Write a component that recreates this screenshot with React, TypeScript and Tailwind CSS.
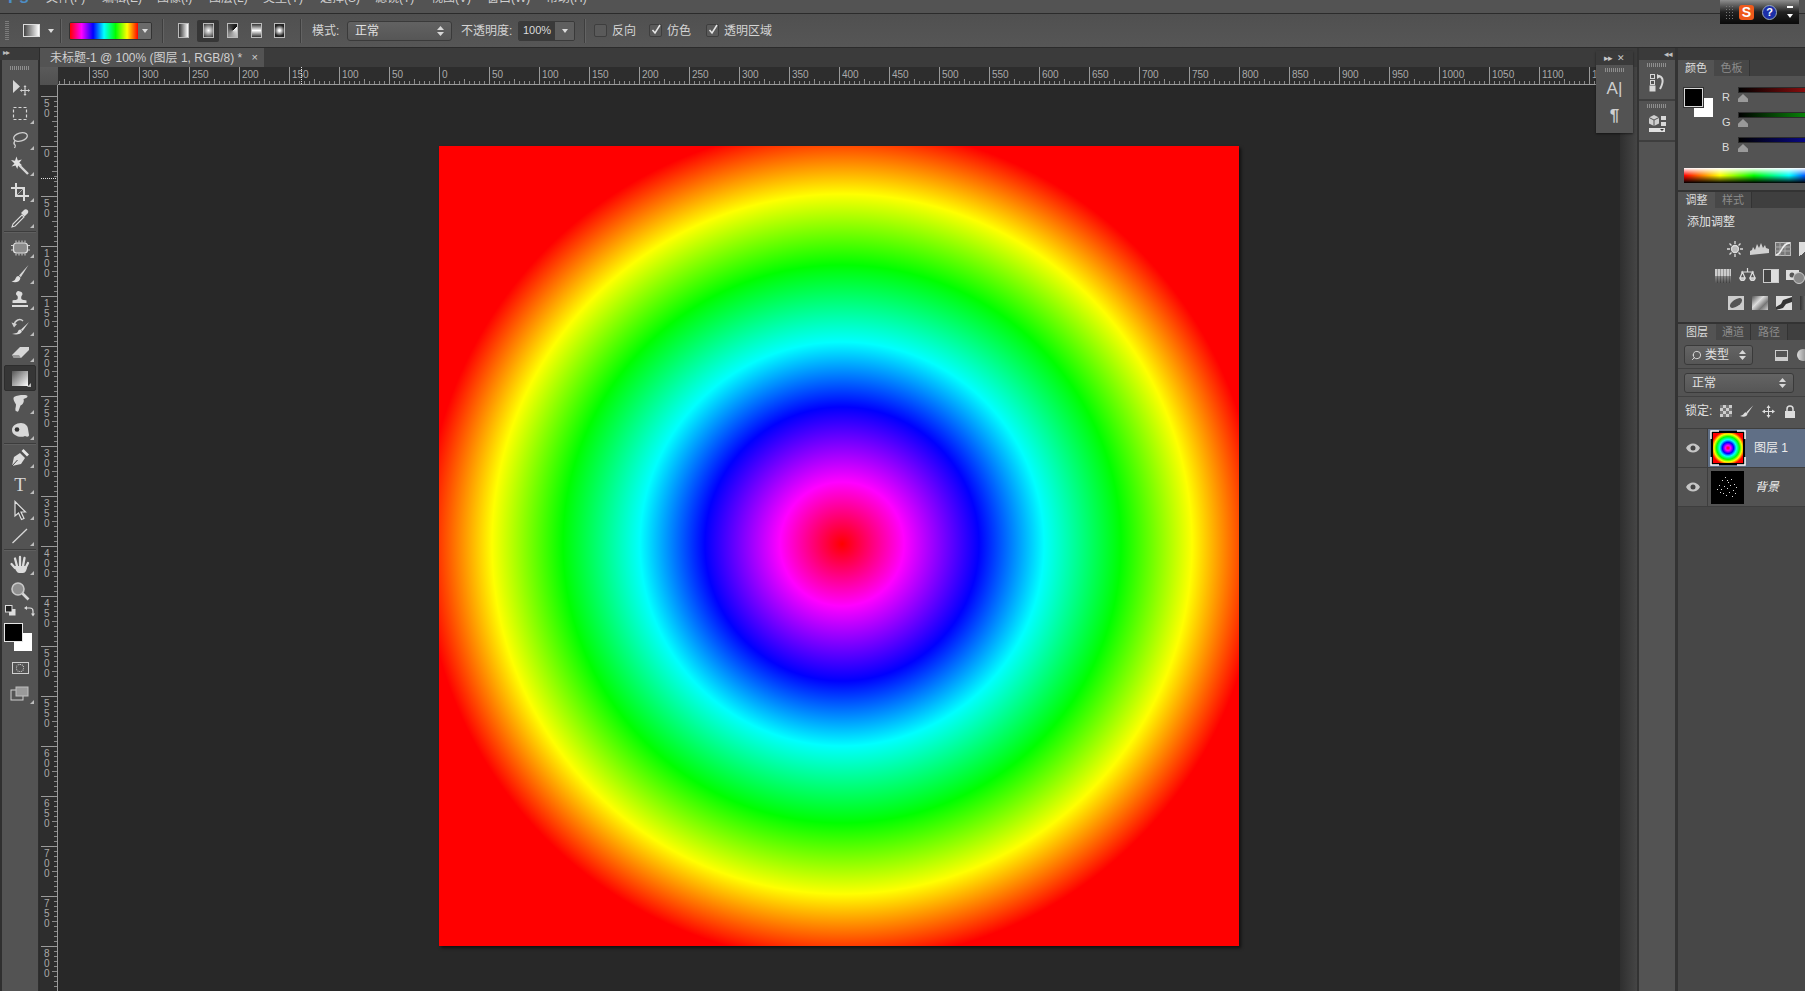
import type { ReactNode } from "react"
import { Search } from "lucide-react"

const menus = [
  { label: "文件(F)", w: "w-[56px]" },
  { label: "编辑(E)", w: "w-[55px]" },
  { label: "图像(I)", w: "w-[52px]" },
  { label: "图层(L)", w: "w-[54px]" },
  { label: "类型(Y)", w: "w-[57px]" },
  { label: "选择(S)", w: "w-[55px]" },
  { label: "滤镜(T)", w: "w-[56px]" },
  { label: "视图(V)", w: "w-[56px]" },
  { label: "窗口(W)", w: "w-[59px]" },
  { label: "帮助(H)", w: "w-[56px]" },
]

// Small svg helper, all tool icons share a 22 box
function Ico({ children, size = 22 }: { children: ReactNode; size?: number }) {
  return (
    <svg width={size} height={size} viewBox="0 0 22 22" fill="none" stroke="none">
      {children}
    </svg>
  )
}

const toolIcons: Record<string, ReactNode> = {
  move: (
    <>
      <path d="M4 3v13l7-6.500z" fill="#d6d6d6" />
      <path d="M16 9v9M11.500 13.500h9" stroke="#d0d0d0" strokeWidth="1.200" />
      <path d="M16 8l-1.500 2h3zM16 19l-1.500-2h3zM11 13.500l2-1.500v3zM21 13.500l-2-1.500v3z" fill="#d0d0d0" />
    </>
  ),
  marquee: <rect x="4.500" y="4.500" width="13" height="12" stroke="#d8d8d8" strokeWidth="1.200" strokeDasharray="3 2" />,
  lasso: (
    <>
      <ellipse cx="11.500" cy="8" rx="7" ry="4" transform="rotate(-15 11.500 8)" stroke="#cfcfcf" strokeWidth="1.300" />
      <path d="M6 12c-2 2-1 3 0 4s0 2-.5 3" stroke="#cfcfcf" strokeWidth="1.200" />
    </>
  ),
  wand: (
    <>
      <path d="M9 9l10 10" stroke="#d6d6d6" strokeWidth="2.400" />
      <path d="M7.500 1.500l1.300 4 4-1-2.500 3.300 3 2.700-4-.4-1 4-1.800-3.700-4 1 3-3L2 5l4 .8z" fill="#e2e2e2" />
    </>
  ),
  crop: (
    <>
      <path d="M7 2v13h13M2 7h13v13" stroke="#dcdcdc" strokeWidth="2" />
      <path d="M8 14l6-6" stroke="#aaa" strokeWidth="1" />
    </>
  ),
  dropper: (
    <>
      <path d="M4 17L13 8l2 2-9 9-3 1z" fill="#4a4a4a" stroke="#dcdcdc" strokeWidth="1.100" />
      <path d="M12 6l3-3c1-1 2.500-1 3.500 0s1 2.500 0 3.500l-3 3z" fill="#dcdcdc" />
    </>
  ),
  heal: (
    <>
      <rect x="4.500" y="6" width="14" height="10" rx="3" fill="#8c8c8c" stroke="#e0e0e0" strokeWidth="1.200" />
      <path d="M7 3.500v2M10 3.500v2M13 3.500v2M16 3.500v2M7 16.500v2M10 16.500v2M13 16.500v2M16 16.500v2M2 8.500h2M2 13h2M19 8.500h2M19 13h2" stroke="#d0d0d0" strokeWidth="1" />
    </>
  ),
  brush: (
    <>
      <path d="M19.500 2L10 12.500l1.800 1.700z" fill="#d6d6d6" />
      <path d="M9.500 13c-3 .3-2.500 3-4 4.300-.8.700-2 1-3 1.200 4 1.500 8.500.5 9-3.800z" fill="#e0e0e0" />
    </>
  ),
  stamp: (
    <>
      <path d="M11 2.500a2.500 2.500 0 0 1 1.700 4.300c-.7.700-.5 2-.3 3.200.2 1 3.600 1 5.100 1.500v2.500H3.500V11.500c1.500-.5 4.900-.5 5.100-1.500.2-1.200.4-2.500-.3-3.200A2.500 2.500 0 0 1 11 2.500z" fill="#dcdcdc" />
      <rect x="3" y="16" width="16" height="2" fill="#dcdcdc" />
    </>
  ),
  history: (
    <>
      <path d="M20 7l-8 7.500 1.500 1.500z" fill="#e0e0e0" />
      <path d="M11.500 14.500c-3 .3-2 3-4 3.500l-4.500 1c4 1 9 .8 10-3z" fill="#dcdcdc" />
      <path d="M5 10c1-5 6-7 9-4" stroke="#d0d0d0" strokeWidth="1.400" />
      <path d="M2.500 7.500l2.500 5 3-3.500z" fill="#d0d0d0" />
    </>
  ),
  eraser: (
    <>
      <path d="M3 14l8-8h9v3l-8 8H5z" fill="#d6d6d6" />
      <path d="M3 14l2 3h7l-2-3z" fill="#9a9a9a" />
    </>
  ),
  smudge: <path d="M5 4c4-2 10-2.500 13-1.500 1 .5.500 2-1 2.500l-2.500 1c1 2.500-.5 5.500-3 6.500l-2 5.500c-.5 1-2.500 1-3-.5-.5-2 .5-3.500.5-6C5.500 9 3.500 6 5 4z" fill="#d8d8d8" />,
  sponge: (
    <>
      <path d="M3 11c0-4 4-7 9-7 4 0 7 3 7 6l1 6c0 2-2 2-4 1-3 1.500-7 1-10-1-2-1-3-3-3-5z" fill="#d8d8d8" />
      <circle cx="8" cy="10.500" r="2.300" fill="#333" />
    </>
  ),
  pen: (
    <>
      <path d="M3 19l2-9 6-4 5 5-4 6z" fill="#dcdcdc" />
      <path d="M3 19l5.500-6" stroke="#444" strokeWidth="1" />
      <path d="M12.500 4l2-2 5.500 5.500-2 2z" fill="#e6e6e6" />
    </>
  ),
  path: <path d="M6 2.500V17l3.500-3 3 6.500 2.500-1-3-6.500h4.500z" fill="#444" stroke="#dedede" strokeWidth="1.200" />,
  line: <path d="M3.500 18L18 4" stroke="#d8d8d8" strokeWidth="1.300" />,
  hand: (
    <>
      <path d="M6 14L2.500 10M8 12L6 4.500M11 11.500V3M14 12l1.500-8M16.500 14l2.500-5" stroke="#dcdcdc" strokeWidth="2.300" strokeLinecap="round" />
      <path d="M5 12h13c0 4-1.500 7-4 7H10c-2 0-3.500-3-5-7z" fill="#dcdcdc" />
    </>
  ),
  zoom: (
    <>
      <circle cx="9" cy="9" r="6" fill="#8f8f8f" stroke="#c8c8c8" strokeWidth="1.600" />
      <path d="M13.500 13.500l6 6" stroke="#d8d8d8" strokeWidth="2.600" />
    </>
  ),
}

function Corner() {
  return <span className="absolute right-[4px] bottom-[3px] w-0 h-0 border-l-[4px] border-l-transparent border-b-[4px] border-b-[#bdbdbd]" />
}

function Tool({ name, corner = true }: { name: string; corner?: boolean }) {
  return (
    <div className="relative h-[26px] flex items-center justify-center">
      <Ico>{toolIcons[name]}</Ico>
      {corner && <Corner />}
    </div>
  )
}

function Grip({ className = "" }: { className?: string }) {
  return <div className={`h-[4px] bg-[repeating-linear-gradient(to_right,#8e8e8e_0,#8e8e8e_1px,transparent_1px,transparent_2px)] ${className}`} />
}

function Sep({ className = "" }: { className?: string }) {
  return <div className={`h-[2px] mx-[2px] border-t border-t-[#3c3c3c] border-b border-b-[#5f5f5f] ${className}`} />
}

function Toolbar() {
  return (
    <div className="w-[40px] shrink-0 flex flex-col bg-[#2f2f2f] border-r border-r-[#2b2b2b]">
      <div className="h-[12px] bg-[#3a3a3a] text-[#bcbcbc] text-[8px] leading-[10px] pl-[3px] tracking-[-1px]">▸▸</div>
      <div className="flex-1 ml-[2px] w-[36px] bg-[#535353] flex flex-col">
        <div className="h-[15px] flex items-center justify-center">
          <Grip className="w-[20px]" />
        </div>
        <Tool name="move" corner={false} />
        <Tool name="marquee" />
        <Tool name="lasso" />
        <Tool name="wand" />
        <Tool name="crop" />
        <Tool name="dropper" />
        <Sep className="mb-[2px]" />
        <Tool name="heal" />
        <Tool name="brush" />
        <Tool name="stamp" />
        <Tool name="history" />
        <Tool name="eraser" />
        <div className="relative h-[26px] flex items-center justify-center mx-[2px] bg-[#363636] rounded-[2px] border border-[#2d2d2d]">
          <div className="w-[16px] h-[15px] bg-[linear-gradient(135deg,#555,#fff)]" />
          <Corner />
        </div>
        <Tool name="smudge" />
        <Tool name="sponge" />
        <Sep />
        <Tool name="pen" />
        <div className="relative h-[26px] flex items-center justify-center">
          <span className="font-['Liberation_Serif',serif] text-[19px] text-[#d8d8d8] leading-none">T</span>
          <Corner />
        </div>
        <Tool name="path" />
        <Tool name="line" />
        <Sep className="mb-[1px]" />
        <Tool name="hand" />
        <Tool name="zoom" corner={false} />
        {/* fg/bg swatches */}
        <div className="h-[13px] flex items-center justify-between px-[3px]">
          <svg width="11" height="11" viewBox="0 0 11 11">
            <rect x="4" y="4" width="6.500" height="6.500" fill="#ddd" />
            <rect x="0.500" y="0.500" width="6.500" height="6.500" fill="#222" stroke="#ddd" />
          </svg>
          <svg width="12" height="12" viewBox="0 0 12 12" fill="none" stroke="#ddd" strokeWidth="1.200">
            <path d="M3 3h4a3 3 0 0 1 3 3v3" />
            <path d="M1 3l3-2v4zM10 11.500L8 8.500h4z" fill="#ddd" stroke="none" />
          </svg>
        </div>
        <div className="h-[28px] mt-[6px] ml-[2px] relative">
          <div className="absolute left-[10px] top-[10px] w-[18px] h-[18px] bg-white" />
          <div className="absolute left-0 top-0 w-[19px] h-[19px] bg-black border border-[#e6e6e6]" />
        </div>
        <div className="h-[26px] mt-[4px] flex items-center justify-center">
          <div className="w-[17px] h-[12px] border border-[#d0d0d0] flex items-center justify-center">
            <div className="w-[8px] h-[8px] rounded-full border border-dotted border-[#e0e0e0]" />
          </div>
        </div>
        <div className="relative h-[26px] flex items-center justify-center">
          <svg width="20" height="16" viewBox="0 0 20 16">
            <rect x="1" y="4" width="12" height="10" fill="#555" stroke="#d0d0d0" />
            <rect x="6" y="1" width="12" height="9" fill="#9a9a9a" stroke="#c0c0c0" />
          </svg>
          <Corner />
        </div>
      </div>
    </div>
  )
}

function Divider() {
  return <div className="w-[2px] h-[24px] border-l border-l-[#3e3e3e] border-r border-r-[#636363] shrink-0" />
}

function UpDown() {
  return (
    <svg width="7" height="10" viewBox="0 0 7 10" fill="#d8d8d8">
      <path d="M3.500 0L7 4H0zM3.500 10L0 6h7z" />
    </svg>
  )
}

function Check({ on }: { on: boolean }) {
  return (
    <div className="relative w-[13px] h-[13px] rounded-[2px] bg-[#5a5a5a] border border-[#3e3e3e] shrink-0">
      {on && (
        <svg className="absolute left-0 -top-[2px]" width="13" height="13" viewBox="0 0 13 13" fill="none" stroke="#e6e6e6" strokeWidth="1.500">
          <path d="M2.500 7l2.500 3 5-8" />
        </svg>
      )}
    </div>
  )
}

function OptionsBar() {
  return (
    <div className="h-[34px] flex items-center bg-[linear-gradient(to_bottom,#505050,#565656)] border-b border-b-[#2b2b2b] text-[12px] text-[#d4d4d4] overflow-hidden shrink-0">
      <div className="ml-[5px] w-[4px] h-[20px] bg-[repeating-linear-gradient(to_bottom,#7c7c7c_0,#7c7c7c_1px,transparent_1px,transparent_2px)]" />
      <div className="ml-[14px] w-[17px] h-[13px] bg-[linear-gradient(to_right,#444,#fff)] border border-[#ddd]" />
      <span className="ml-[8px] w-0 h-0 border-x-[3px] border-x-transparent border-t-[4px] border-t-[#ddd]" />
      <div className="ml-[6px]"><Divider /></div>
      <div className="ml-[7px] flex h-[18px] rounded-[2px] overflow-hidden border border-[#333]">
        <div className="w-[68px] bg-[linear-gradient(to_right,#f00,#f0f_17%,#00f_34%,#0ff_50%,#0f0_67%,#ff0_84%,#f00)]" />
        <div className="w-[13px] bg-[#6a6a6a] flex items-center justify-center">
          <span className="w-0 h-0 border-x-[3px] border-x-transparent border-t-[4px] border-t-[#ddd]" />
        </div>
      </div>
      <div className="ml-[10px]"><Divider /></div>
      <div className="ml-[14px] w-[11px] h-[15px] border border-[#bbb] bg-[linear-gradient(to_right,#333,#fff)]" />
      <div className="ml-[8px] w-[22px] h-[22px] bg-[#363636] rounded-[2px] flex items-center justify-center">
        <div className="w-[11px] h-[15px] border border-[#bbb] bg-[radial-gradient(circle,#fff,#333)]" />
      </div>
      <div className="ml-[8px] w-[11px] h-[15px] border border-[#bbb] bg-[conic-gradient(from_45deg,#fff,#111)]" />
      <div className="ml-[13px] w-[11px] h-[15px] border border-[#bbb] bg-[linear-gradient(to_bottom,#333,#fff,#333)]" />
      <div className="ml-[12px] w-[11px] h-[15px] border border-[#bbb] bg-[radial-gradient(circle,#fff_10%,#222_70%)]" />
      <div className="ml-[15px]"><Divider /></div>
      <span className="ml-[10px] w-[35px]">模式:</span>
      <div className="w-[105px] h-[20px] flex items-center justify-between px-[7px] bg-[linear-gradient(to_bottom,#626262,#565656)] border border-[#3a3a3a] rounded-[3px]">
        <span className="text-[#e0e0e0]">正常</span>
        <UpDown />
      </div>
      <span className="ml-[9px] w-[57px] whitespace-nowrap">不透明度:</span>
      <div className="flex h-[20px] rounded-[2px] overflow-hidden border border-[#3a3a3a]">
        <div className="w-[36px] bg-[#3a3a3a] flex items-center justify-center text-[11px] text-[#dadada]">100%</div>
        <div className="w-[19px] bg-[#5f5f5f] flex items-center justify-center">
          <span className="w-0 h-0 border-x-[3px] border-x-transparent border-t-[4px] border-t-[#ddd]" />
        </div>
      </div>
      <div className="ml-[9px]"><Divider /></div>
      <div className="ml-[8px]"><Check on={false} /></div>
      <span className="ml-[5px]">反向</span>
      <div className="ml-[13px]"><Check on /></div>
      <span className="ml-[5px]">仿色</span>
      <div className="ml-[15px]"><Check on /></div>
      <span className="ml-[5px]">透明区域</span>
    </div>
  )
}

const ZERO_X = 381
const ZERO_Y = 61

function HRuler() {
  const ticks = []
  for (let v = -400; v <= 1200; v += 5) {
    const x = ZERO_X + v + 0.5
    const major = v % 50 === 0
    const mid = v % 25 === 0
    ticks.push(<line key={v} x1={x} x2={x} y1={major ? 0 : mid ? 12 : 14} y2={17} stroke={major ? "#9a9a9a" : "#8a8a8a"} />)
  }
  const labels = []
  for (let v = -350; v <= 1150; v += 50) {
    labels.push(
      <text key={v} x={ZERO_X + v + 3} y={11} fontSize="10" fill="#a9a9a9" fontFamily="Liberation Sans, sans-serif">
        {Math.abs(v)}
      </text>,
    )
  }
  return (
    <svg width="1562" height="18" className="block shrink-0">
      <rect width="1562" height="18" fill="#2d2d2d" />
      {ticks}
      {labels}
      <line x1="0" x2="1562" y1="17.500" y2="17.500" stroke="#9a9a9a" />
      <line x1="243.500" x2="243.500" y1="0" y2="17" stroke="#e0e0e0" strokeDasharray="1 1" />
    </svg>
  )
}

function VRuler() {
  const ticks = []
  for (let v = -50; v <= 900; v += 5) {
    const y = ZERO_Y + v + 0.5
    const major = v % 50 === 0
    const mid = v % 25 === 0
    ticks.push(<line key={v} y1={y} y2={y} x1={major ? 1 : mid ? 12 : 14} x2={17} stroke={major ? "#9a9a9a" : "#8a8a8a"} />)
  }
  const labels = []
  for (let v = -50; v <= 850; v += 50) {
    const digits = String(Math.abs(v)).split("")
    digits.forEach((d, i) => {
      labels.push(
        <text key={`${v}-${i}`} x={4} y={ZERO_Y + v + 11 + i * 10} fontSize="10" fill="#a9a9a9" fontFamily="Liberation Sans, sans-serif">
          {d}
        </text>,
      )
    })
  }
  return (
    <svg width="18" height="906" className="block shrink-0">
      <rect width="18" height="906" fill="#2d2d2d" />
      {ticks}
      {labels}
      <line x1="17.500" x2="17.500" y1="0" y2="906" stroke="#9a9a9a" />
      <line y1="93.500" y2="93.500" x1="1" x2="17" stroke="#e0e0e0" strokeDasharray="1 1" />
    </svg>
  )
}

function Document() {
  return (
    <div className="w-[1580px] shrink-0 flex flex-col min-h-0">
      <div className="h-[19px] shrink-0 bg-[#3b3b3b] flex">
        <div className="w-[224px] bg-[#535353] flex items-center pl-[10px] pr-[6px] justify-between text-[12px] text-[#d0d0d0] whitespace-nowrap">
          <span>未标题-1 @ 100% (图层 1, RGB/8) *</span>
          <span className="text-[11px] leading-none">×</span>
        </div>
      </div>
      <div className="flex shrink-0">
        <div className="w-[18px] h-[18px] bg-[linear-gradient(to_bottom,#5a5a5a,#505050)]" />
        <HRuler />
      </div>
      <div className="flex-1 flex min-h-0 overflow-hidden">
        <VRuler />
        <div className="flex-1 bg-[#282828] pl-[381px] pt-[61px]">
          <div className="w-[800px] h-[800px] shadow-[2px_2px_3px_rgba(0,0,0,0.6)] bg-[radial-gradient(circle_418px_at_403px_398px,#f00_0,#f0f_62px,#00f_137px,#0ff_202px,#0f0_279px,#ff0_350px,#f00_418px)]" />
        </div>
      </div>
    </div>
  )
}

function Dock() {
  return (
    <div className="w-[40px] shrink-0 flex flex-col bg-[#535353] border-x-2 border-x-[#333]">
      <div className="h-[12px] bg-[#3a3a3a] shrink-0" />
      <div className="h-[41px] shrink-0 border-b-2 border-b-[#3e3e3e] flex flex-col items-center pt-[3px]">
        <Grip className="w-[20px]" />
        <svg className="mt-[5px] ml-[2px]" width="20" height="20" viewBox="0 0 20 20" fill="none" stroke="#d8d8d8">
          <rect x="2.500" y="2.500" width="4" height="4" />
          <rect x="2.500" y="8.500" width="4" height="4" />
          <rect x="2" y="14" width="5" height="5" fill="#d8d8d8" />
          <path d="M10 4c4 0 7 4 2 13" strokeWidth="2" />
          <path d="M9 2v5l4-2.500z" fill="#d8d8d8" stroke="none" />
        </svg>
      </div>
      <div className="h-[41px] shrink-0 border-b-2 border-b-[#3e3e3e] flex flex-col items-center pt-[3px]">
        <Grip className="w-[20px]" />
        <svg className="mt-[5px] ml-[2px]" width="20" height="20" viewBox="0 0 20 20">
          <path d="M6 2l5 2.500v6L6 13l-5-2.500v-6z" fill="#cfcfcf" />
          <path d="M1 4.500l5 2.500 5-2.500M6 7v6" stroke="#555" fill="none" />
          <rect x="13" y="3" width="5" height="4" fill="#d8d8d8" />
          <rect x="13" y="9" width="5" height="4" fill="#d8d8d8" />
          <rect x="1" y="15" width="16" height="4" fill="#e0e0e0" />
          <path d="M12 16h4l-2 2z" fill="#333" />
        </svg>
      </div>
    </div>
  )
}

function Tabs({ items, widths }: { items: string[]; widths: string[] }) {
  return (
    <div className="h-[16px] shrink-0 flex bg-[#3f3f3f] text-[11px] leading-[17px] whitespace-nowrap">
      {items.map((t, i) => (
        <div key={t} className={`${widths[i]} text-center ${i === 0 ? "bg-[#535353] text-[#dcdcdc]" : "bg-[#474747] text-[#8c8c8c] border-r border-r-[#333]"}`}>
          {t}
        </div>
      ))}
    </div>
  )
}

function Slider({ label, track }: { label: string; track: string }) {
  return (
    <div className="h-[25px] flex">
      <span className="w-[16px] shrink-0 pt-[5px] text-[11px] text-[#dcdcdc] leading-[14px]">{label}</span>
      <div className="relative w-[80px] shrink-0">
        <div className={`h-[6px] mt-[2px] border border-[#2b2b2b] ${track}`} />
        <div className="absolute left-[0px] top-[9px] w-[10px] h-[8px] bg-[#9a9a9a] [clip-path:polygon(50%_0,100%_60%,100%_100%,0_100%,0_60%)]" />
      </div>
    </div>
  )
}

function ColorPanel() {
  return (
    <div className="h-[132px] shrink-0 bg-[#535353] border-b-2 border-b-[#333] flex flex-col">
      <Tabs items={["颜色", "色板"]} widths={["w-[36px]", "w-[36px]"]} />
      <div className="flex pt-[12px] pl-[6px] h-[92px] overflow-hidden">
        <div className="relative w-[38px] h-[40px] shrink-0">
          <div className="absolute left-[10px] top-[10px] w-[19px] h-[19px] bg-white" />
          <div className="absolute left-0 top-0 w-[19px] h-[19px] bg-black border border-[#d8d8d8] outline outline-[#333]" />
        </div>
        <div className="w-[96px] shrink-0 -mt-[3px]">
          <Slider label="R" track="bg-[linear-gradient(to_right,#000,#a01010)]" />
          <Slider label="G" track="bg-[linear-gradient(to_right,#000,#0a9a0a)]" />
          <Slider label="B" track="bg-[linear-gradient(to_right,#000,#0a0a9a)]" />
        </div>
      </div>
      <div className="ml-[6px] h-[15px] bg-[linear-gradient(to_bottom,#fff_0%,transparent_50%,#000_100%),linear-gradient(to_right,#f00_0,#ff0_36px,#0f0_70px,#0ff_105px,#00f_130px)]" />
    </div>
  )
}

function AdjIcon({ children, w = "w-[20px]" }: { children: ReactNode; w?: string }) {
  return <div className={`${w} h-[18px] flex items-center justify-center shrink-0`}>{children}</div>
}

function AdjustPanel() {
  return (
    <div className="h-[132px] shrink-0 bg-[#535353] border-b-2 border-b-[#333] flex flex-col overflow-hidden">
      <Tabs items={["调整", "样式"]} widths={["w-[37px]", "w-[37px]"]} />
      <div className="pl-[9px] pt-[6px] h-[27px] text-[12px] text-[#e0e0e0] leading-[16px]">添加调整</div>
      <div className="flex gap-[4px] pl-[47px] h-[27px] items-center">
        <AdjIcon>
          <svg width="18" height="18" viewBox="0 0 18 18" fill="none" stroke="#ddd" strokeWidth="1.300">
            <circle cx="9" cy="9" r="3.500" fill="#bbb" />
            <path d="M9 1v3M9 14v3M1 9h3M14 9h3M3.500 3.500l2 2M12.500 12.500l2 2M3.500 14.500l2-2M12.500 5.500l2-2" />
          </svg>
        </AdjIcon>
        <AdjIcon>
          <svg width="19" height="12" viewBox="0 0 19 12">
            <path d="M0 12V8l2-1 1-3 2 3 2-6 2 4 2-5 2 5 2-3 1 3 3 1v4z" fill="#d0d0d0" />
          </svg>
        </AdjIcon>
        <AdjIcon>
          <svg width="16" height="14" viewBox="0 0 16 14" fill="none" stroke="#bbb">
            <rect x="0.500" y="0.500" width="15" height="13" fill="#777" />
            <path d="M0 5h16M0 9h16M5 0v14M10 0v14" stroke="#aaa" />
            <path d="M1 13c6 0 5-12 14-12" stroke="#eee" strokeWidth="1.500" />
          </svg>
        </AdjIcon>
        <AdjIcon>
          <div className="w-[16px] h-[14px] bg-[linear-gradient(135deg,#ddd_50%,#555_50%)]" />
        </AdjIcon>
      </div>
      <div className="flex gap-[4px] pl-[35px] h-[27px] items-center">
        <AdjIcon>
          <div className="w-[16px] h-[14px] bg-[repeating-linear-gradient(to_right,transparent_0,transparent_2px,rgba(0,0,0,0.25)_2px,rgba(0,0,0,0.25)_3px),linear-gradient(to_bottom,#ccc_50%,#888_50%,#555)]" />
        </AdjIcon>
        <AdjIcon>
          <svg width="17" height="15" viewBox="0 0 17 15" fill="none" stroke="#ddd" strokeWidth="1.200">
            <path d="M8.500 0v4M2 4h13M3.500 4L1 10h5zM13.500 4L11 10h5z" />
            <path d="M1 10a2.500 2.500 0 0 0 5 0zM11 10a2.500 2.500 0 0 0 5 0z" fill="#bbb" />
          </svg>
        </AdjIcon>
        <AdjIcon>
          <div className="w-[16px] h-[14px] flex border border-[#ccc]">
            <div className="w-1/2 bg-[#444]" />
            <div className="w-1/2 bg-[#ddd]" />
          </div>
        </AdjIcon>
        <AdjIcon>
          <svg width="19" height="16" viewBox="0 0 19 16">
            <rect x="0" y="2" width="13" height="10" fill="#ddd" />
            <circle cx="6" cy="7" r="2.500" fill="#555" />
            <circle cx="13" cy="10" r="5.500" fill="#888" stroke="#ccc" />
          </svg>
        </AdjIcon>
      </div>
      <div className="flex gap-[4px] pl-[48px] h-[27px] items-center">
        <AdjIcon>
          <svg width="16" height="14" viewBox="0 0 16 14">
            <rect width="16" height="14" fill="#ccc" />
            <ellipse cx="8" cy="7" rx="7" ry="3.500" transform="rotate(-35 8 7)" fill="#555" />
          </svg>
        </AdjIcon>
        <AdjIcon>
          <div className="w-[16px] h-[14px] bg-[linear-gradient(135deg,#555,#ddd_40%,#777_70%,#ccc)]" />
        </AdjIcon>
        <AdjIcon>
          <svg width="16" height="14" viewBox="0 0 16 14">
            <rect width="16" height="14" fill="#ddd" />
            <path d="M0 11l5-3 2-4 9-3v5l-6 2-3 4-7 2z" fill="#333" />
          </svg>
        </AdjIcon>
        <AdjIcon>
          <div className="w-[16px] h-[14px] bg-[linear-gradient(to_right,#333,#ccc)]" />
        </AdjIcon>
      </div>
    </div>
  )
}

function Eye() {
  return (
    <div className="w-[30px] shrink-0 flex items-center justify-center border-r border-r-[#3e3e3e] self-stretch">
      <svg width="14" height="10" viewBox="0 0 14 10">
        <path d="M0 5c3-6 11-6 14 0-3 6-11 6-14 0z" fill="#c6c6c6" />
        <circle cx="7" cy="5" r="2.500" fill="#444" />
      </svg>
    </div>
  )
}

const stars = [
  [8, 14], [11, 9], [14, 6], [17, 11], [20, 8], [23, 13], [10, 18], [13, 15], [16, 17], [19, 14], [22, 19],
  [25, 16], [12, 22], [15, 24], [18, 21], [21, 25], [16, 9], [24, 22], [9, 21], [6, 18],
]

function LayersPanel() {
  return (
    <div className="flex-1 min-h-0 bg-[#474747] flex flex-col overflow-hidden">
      <div className="bg-[#535353] shrink-0">
        <Tabs items={["图层", "通道", "路径"]} widths={["w-[38px]", "w-[35px]", "w-[37px]"]} />
        <div className="h-[29px] pl-[6px] pt-[2px] flex items-center border-b border-b-[#414141]">
          <div className="w-[69px] h-[20px] shrink-0 flex items-center pl-[6px] pr-[6px] rounded-[3px] border border-[#3a3a3a] bg-[linear-gradient(to_bottom,#646464,#565656)] text-[12px] text-[#e0e0e0]">
            <Search size={11} strokeWidth={2} className="-scale-x-100 mr-[3px]" />
            <span className="flex-1">类型</span>
            <UpDown />
          </div>
          <div className="ml-[22px] w-[13px] h-[11px] border border-[#ccc] bg-[linear-gradient(to_top,#ccc_30%,transparent_30%)] shrink-0" />
          <div className="ml-[9px] w-[12px] h-[12px] rounded-full bg-[linear-gradient(to_right,#ddd,#777)] shrink-0" />
        </div>
        <div className="h-[28px] pl-[6px] flex items-center border-b border-b-[#414141]">
          <div className="w-[110px] h-[20px] shrink-0 flex items-center justify-between px-[7px] rounded-[3px] border border-[#3a3a3a] bg-[linear-gradient(to_bottom,#646464,#565656)] text-[12px] text-[#e0e0e0]">
            <span>正常</span>
            <UpDown />
          </div>
        </div>
        <div className="h-[32px] pl-[7px] pb-[3px] flex items-center border-b border-b-[#3e3e3e] text-[12px] text-[#e0e0e0]">
          <span className="w-[35px] whitespace-nowrap">锁定:</span>
          <div className="w-[12px] h-[12px] shrink-0 bg-[conic-gradient(#ccc_25%,#777_0_50%,#ccc_0_75%,#777_0)] bg-[length:6px_6px]" />
          <svg className="ml-[7px] shrink-0" width="16" height="14" viewBox="0 0 22 22">
            <path d="M21 2L10 13l2 2z" fill="#ddd" />
            <path d="M9 13c-3 .5-2 4-9 6 6 2 11 1 12-4z" fill="#ddd" />
          </svg>
          <svg className="ml-[7px] shrink-0" width="13" height="13" viewBox="0 0 13 13" fill="#ddd" stroke="#ddd">
            <path d="M6.500 1v11M1 6.500h11" />
            <path d="M6.500 0L4.500 3h4zM6.500 13l-2-3h4zM0 6.500l3-2v4zM13 6.500l-3-2v4z" stroke="none" />
          </svg>
          <svg className="ml-[9px] shrink-0" width="12" height="13" viewBox="0 0 12 13">
            <path d="M3 6V4a3 3 0 0 1 6 0v2" fill="none" stroke="#ddd" strokeWidth="1.500" />
            <rect x="1" y="6" width="10" height="7" fill="#ddd" />
          </svg>
        </div>
        <div className="h-[39px] flex items-center border-b border-b-[#3e3e3e]">
          <Eye />
          <div className="flex-1 self-stretch flex items-center bg-[#606f86] pl-[3px]">
            <div className="relative w-[34px] h-[34px] shrink-0 border-2 border-black bg-[radial-gradient(circle_17px_at_50%_50%,#f00_0,#f0f_2.600px,#00f_5.600px,#0ff_8.300px,#0f0_11.400px,#ff0_14px,#f00_16.800px)]">
              <svg className="absolute -left-[3px] -top-[3px]" width="36" height="36" viewBox="0 0 36 36" fill="none" stroke="#fff" strokeWidth="1.500">
                <path d="M1 9V1h8M27 1h8v8M35 27v8h-8M9 35H1v-8" />
              </svg>
            </div>
            <span className="ml-[9px] text-[12px] text-[#ececec] whitespace-nowrap">图层 1</span>
          </div>
        </div>
        <div className="h-[39px] flex items-center border-b border-b-[#3e3e3e]">
          <Eye />
          <div className="flex-1 self-stretch flex items-center pl-[3px]">
            <svg className="shrink-0" width="33" height="33" viewBox="0 0 33 33">
              <rect width="33" height="33" fill="#000" />
              {stars.map(([x, y], i) => (
                <rect key={i} x={x} y={y} width="1" height="1" fill="#ddd" />
              ))}
            </svg>
            <span className="ml-[11px] text-[12px] italic text-[#ececec]">背景</span>
          </div>
        </div>
      </div>
    </div>
  )
}

function Panels() {
  return (
    <div className="flex-1 min-w-0 flex flex-col bg-[#333] pl-[1px] overflow-hidden">
      <div className="h-[12px] shrink-0 bg-[#3a3a3a]" />
      <ColorPanel />
      <AdjustPanel />
      <LayersPanel />
    </div>
  )
}

export default function App() {
  return (
    <div className="relative w-[1805px] h-[991px] overflow-hidden flex flex-col bg-[#535353] font-['Liberation_Sans','Noto_Sans_CJK_SC',sans-serif]">
      {/* menu bar, cut off by the top of the screenshot */}
      <div className="h-[14px] shrink-0 flex items-end overflow-hidden bg-[#535353] border-b border-b-[#2b2b2b] pb-[8px] pl-[8px] text-[12px] leading-[14px] text-[#d0d0d0] whitespace-nowrap">
        <span className="w-[38px] font-bold text-[17px] leading-[14px] text-[#4d8ec6]">Ps</span>
        {menus.map((m) => (
          <span key={m.label} className={`${m.w} shrink-0`}>{m.label}</span>
        ))}
      </div>
      <OptionsBar />
      <div className="flex-1 flex min-h-0">
        <Toolbar />
        <Document />
        <div className="w-[17px] shrink-0 flex flex-col">
          <div className="h-[19px] bg-[#3b3b3b] shrink-0" />
          <div className="flex-1 bg-[linear-gradient(to_right,#2f2f2f,#454545)]" />
        </div>
        <Dock />
        <Panels />
      </div>

      {/* floating character panel */}
      <div className="absolute left-[1596px] top-[51px] w-[37px] h-[82px] bg-[#535353] flex flex-col items-center shadow-[0_1px_2px_rgba(0,0,0,0.5)]">
        <div className="w-full h-[14px] bg-[#3a3a3a] flex items-center justify-between px-[8px] text-[9px] leading-none text-[#c8c8c8]">
          <span className="tracking-[-1px]">▸▸</span>
          <span>✕</span>
        </div>
        <Grip className="w-[20px] mt-[3px]" />
        <span className="mt-[7px] text-[17px] leading-[20px] text-[#cfcfcf]">A|</span>
        <span className="mt-[7px] text-[17px] leading-[20px] font-bold text-[#cfcfcf]">¶</span>
      </div>

      {/* dock collapse arrows */}
      <span className="absolute left-[1664px] top-[49px] text-[9px] leading-[10px] tracking-[-1px] text-[#c0c0c0]">◂◂</span>

      {/* IME widget */}
      <div className="absolute left-[1720px] top-0 w-[79px] h-[24px] flex items-center bg-[linear-gradient(to_bottom,#8e8e8e,#222_50%,#0a0a0a)]">
        <div className="ml-[5px] w-[8px] h-[14px] bg-[radial-gradient(#777_1px,transparent_1px)] bg-[length:3px_3px]" />
        <div className="ml-[6px] w-[15px] h-[15px] rounded-[3px] bg-[#ee5a1c] text-white font-bold text-[14px] leading-[15px] text-center">S</div>
        <div className="ml-[8px] w-[15px] h-[15px] rounded-full bg-[#1c2fa8] border border-[#9ab] text-white font-bold text-[11px] leading-[13px] text-center">?</div>
        <div className="ml-[10px] flex flex-col items-center gap-[6px]">
          <div className="w-[6px] h-[2px] bg-white" />
          <span className="w-0 h-0 border-x-[3px] border-x-transparent border-t-[4px] border-t-white" />
        </div>
      </div>
    </div>
  )
}
